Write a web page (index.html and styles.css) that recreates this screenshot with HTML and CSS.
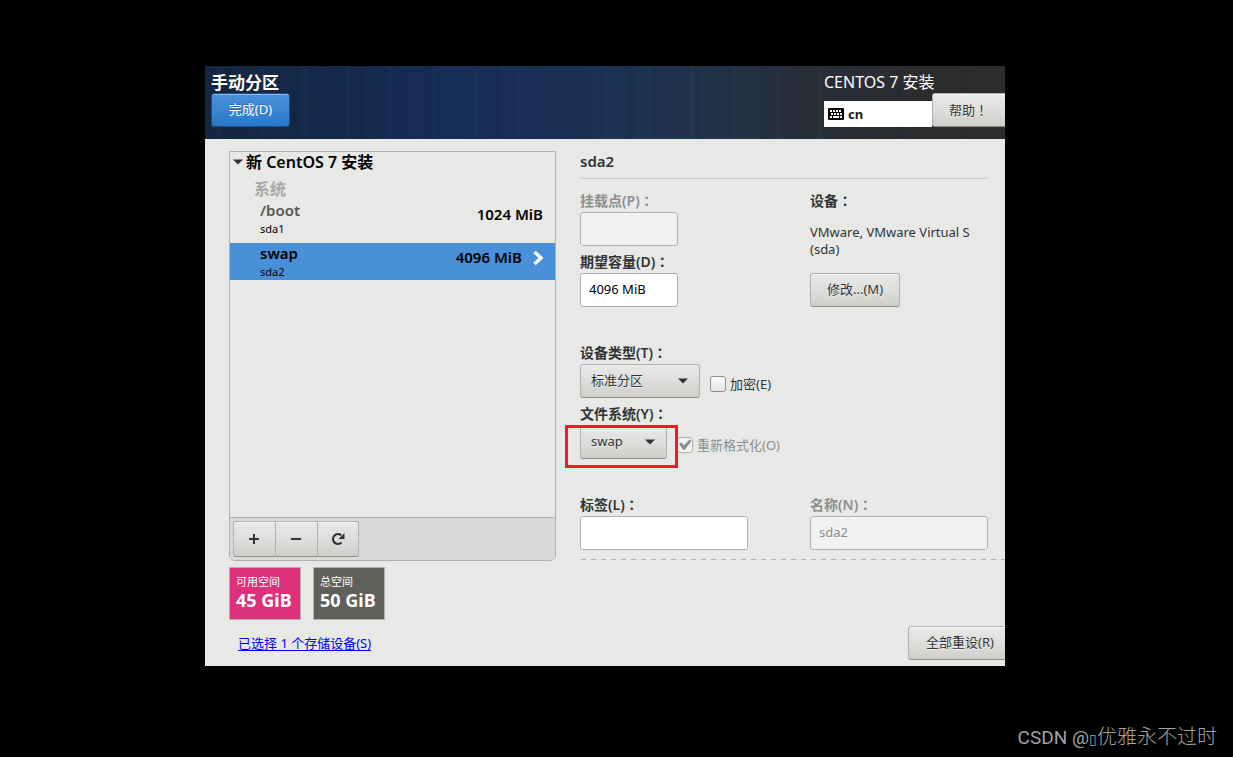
FILE: index.html
```html
<!DOCTYPE html>
<html lang="zh-CN">
<head>
<meta charset="utf-8">
<title>手动分区</title>
<link rel="stylesheet" href="styles.css">
</head>
<body>
<main class="installer">
  <header class="topbar">
    <div class="topbar-start">
      <h1 class="page-title">手动分区</h1>
      <button class="btn btn-primary" type="button">完成(D)</button>
    </div>
    <div class="topbar-end">
      <p class="product">CENTOS 7 安装</p>
      <div class="topbar-tools">
        <div class="keyboard">
          <svg class="keyboard-icon" width="16" height="12" viewBox="0 0 16 12" aria-hidden="true">
            <rect width="16" height="12" rx="1" fill="#000"/>
            <path d="M2 3h2M5 3h2M8 3h2M11 3h2M3 6h2M6 6h2M9 6h2M12 6h2M2 9h2M5 9h6M12 9h2" stroke="#fff" stroke-width="2"/>
          </svg>
          <span>cn</span>
        </div>
        <button class="btn btn-help" type="button">帮助<span class="wide-mark" lang="zh-TW">！</span></button>
      </div>
    </div>
  </header>

  <div class="content">
    <section class="left">
      <div class="panel">
        <div class="tree">
          <h2 class="tree-title">
            <svg width="10" height="6" viewBox="0 0 10 6" aria-hidden="true"><path d="M0 .5h10L5 5.5z" fill="#2e3436"/></svg>
            新 CentOS 7 安装
          </h2>
          <h3 class="tree-group">系统</h3>
          <ul class="mounts">
            <li class="mount">
              <div class="mount-text"><strong class="mount-name">/boot</strong><span class="mount-dev">sda1</span></div>
              <span class="mount-size">1024 MiB</span>
            </li>
            <li class="mount mount-selected">
              <div class="mount-text"><strong class="mount-name">swap</strong><span class="mount-dev">sda2</span></div>
              <span class="mount-size">4096 MiB</span>
              <svg class="chevron" width="10" height="14" viewBox="0 0 10 14" aria-hidden="true"><path d="M1.5 1L8 7l-6.500 6" fill="none" stroke="#fff" stroke-width="3.4"/></svg>
            </li>
          </ul>
        </div>
        <div class="toolbar">
          <div class="btn-group">
            <button class="btn tool" type="button" aria-label="添加"><svg width="12" height="12" viewBox="0 0 12 12"><path d="M1 6h10M6 1v10" stroke="#2e3436" stroke-width="2"/></svg></button>
            <button class="btn tool" type="button" aria-label="删除"><svg width="12" height="12" viewBox="0 0 12 12"><path d="M1 6h10" stroke="#2e3436" stroke-width="2"/></svg></button>
            <button class="btn tool" type="button" aria-label="重新载入"><svg width="14" height="14" viewBox="0 0 14 14"><path d="M10.500 10.500A4.900 4.900 0 1 1 10.200 3.400" fill="none" stroke="#2e3436" stroke-width="2.200"/><path d="M13.500 1v6h-6z" fill="#2e3436"/></svg></button>
          </div>
        </div>
      </div>
      <div class="tiles">
        <div class="tile tile-free"><span class="tile-label">可用空间</span><strong class="tile-value">45 GiB</strong></div>
        <div class="tile tile-total"><span class="tile-label">总空间</span><strong class="tile-value">50 GiB</strong></div>
      </div>
      <a class="devices-link" href="#">已选择 1 个存储设备(S)</a>
    </section>

    <section class="right">
      <h2 class="detail-title">sda2</h2>
      <form class="form">
        <div class="form-row">
          <div class="stack">
            <div class="field">
              <label class="label label-off" for="mount">挂载点(P)<span class="wide-mark" lang="zh-TW">：</span></label>
              <input class="input input-short" id="mount" type="text" disabled>
            </div>
            <div class="field">
              <label class="label" for="size">期望容量(D)<span class="wide-mark" lang="zh-TW">：</span></label>
              <input class="input input-short" id="size" type="text" value="4096 MiB">
            </div>
          </div>
          <div class="field">
            <span class="label">设备<span class="wide-mark" lang="zh-TW">：</span></span>
            <p class="device">VMware, VMware Virtual S (sda)</p>
            <button class="btn btn-modify" type="button">修改...(M)</button>
          </div>
        </div>

        <div class="stack">
          <div class="field">
            <label class="label" for="type">设备类型(T)<span class="wide-mark" lang="zh-TW">：</span></label>
            <div class="controls">
              <div class="select-box select-type">
                <select class="select" id="type"><option>标准分区</option></select>
                <svg class="caret" width="10" height="6" viewBox="0 0 10 6" aria-hidden="true"><path d="M0 .5h10L5 5.5z" fill="#2e3436"/></svg>
              </div>
              <label class="check"><input class="checkbox" type="checkbox">加密(E)</label>
            </div>
          </div>
          <div class="field">
            <label class="label" for="fs">文件系统(Y)<span class="wide-mark" lang="zh-TW">：</span></label>
            <div class="controls">
              <div class="select-box select-fs">
                <select class="select" id="fs"><option>swap</option></select>
                <svg class="caret" width="10" height="6" viewBox="0 0 10 6" aria-hidden="true"><path d="M0 .5h10L5 5.5z" fill="#2e3436"/></svg>
                <div class="highlight"></div>
              </div>
              <label class="check check-off">
                <span class="check-box"><input class="checkbox" type="checkbox" checked disabled><svg class="tick" width="14" height="12" viewBox="0 0 14 12" aria-hidden="true"><path d="M1 5l2.500-1.500L6 6.200 11.500.5l2 1.500L6.500 11H5.500z" fill="#8b8e8f"/></svg></span>重新格式化(O)</label>
            </div>
          </div>
        </div>

        <div class="form-row">
          <div class="field">
            <label class="label" for="tag">标签(L)<span class="wide-mark" lang="zh-TW">：</span></label>
            <input class="input input-medium" id="tag" type="text">
          </div>
          <div class="field">
            <label class="label label-off" for="name">名称(N)<span class="wide-mark" lang="zh-TW">：</span></label>
            <input class="input" id="name" type="text" value="sda2" disabled>
          </div>
        </div>
      </form>
      <div class="divider"></div>
      <button class="btn btn-reset" type="button">全部重设(R)</button>
    </section>
  </div>
</main>
<footer class="watermark">CSDN @<span class="missing">▯</span><span class="watermark-name">优雅永不过时</span></footer>
</body>
</html>
```
FILE: styles.css
```css
* {
  box-sizing: border-box;
}

body {
  margin: 0;
  padding: 66px 228px 0 205px;
  background: #000;
  color: #2e3436;
  font: 13px/17px "Noto Sans", "Noto Sans CJK SC", sans-serif;
}

h1, h2, h3, p, ul {
  margin: 0;
  padding: 0;
}

button, input, select {
  font: inherit;
  color: inherit;
}

.wide-mark {
  font-family: "Noto Sans CJK TC", sans-serif;
}

.installer {
  background: #e8e8e6;
  overflow: hidden;
}

.topbar {
  display: flex;
  justify-content: space-between;
  min-height: 73px;
  padding: 6px 0 12px 6px;
  color: #fff;
  background:
    linear-gradient(90deg, transparent 55%, rgba(44, 44, 44, .4) 88%),
    repeating-linear-gradient(90deg, transparent 0 11px, rgba(40, 85, 150, .1) 13px 14px, transparent 17px 43px),
    repeating-linear-gradient(90deg, transparent 0 19px, rgba(5, 20, 50, .1) 22px 25px, transparent 28px 67px),
    linear-gradient(90deg, #15263f 0%, #16284a 15%, #162d55 30%, #1b3054 48%, #20334e 60%, #262f3b 76%, #2b2c2e 90%, #2c2c2c 100%);
}

.topbar-start {
  display: flex;
  flex-direction: column;
  align-items: flex-start;
}

.page-title {
  font-size: 17px;
  line-height: 21px;
  font-weight: 700;
}

.topbar-end {
  width: 181px;
}

.product {
  font-size: 16px;
  line-height: 21px;
}

.topbar-tools {
  display: flex;
  align-items: flex-end;
}

.keyboard {
  display: flex;
  align-items: center;
  gap: 4px;
  width: 108px;
  height: 26px;
  padding: 0 4px;
  background: #fff;
  color: #1a1a1a;
  font-weight: 700;
}

.btn {
  height: 34px;
  padding: 0 16px 1px;
  border: 1px solid #b0b0ae;
  border-bottom-color: #8d8d8a;
  border-radius: 3px;
  background: linear-gradient(#e9e9e8, #dededc 50%, #cececb);
  box-shadow: inset 0 1px #f8f8f7;
  color: #2e3436;
  text-shadow: 0 1px #f4f4f4;
  white-space: nowrap;
}

.btn-primary {
  min-width: 79px;
  border-color: #1c5187;
  background: linear-gradient(#4a90d9, #3c86d4 50%, #2a76c6);
  box-shadow: inset 0 1px #8dbae8;
  color: #fff;
  text-shadow: 0 -1px #2a6cb3;
}

.btn-help {
  flex: 1;
  border-right: 0;
  border-radius: 3px 0 0 3px;
  text-align: left;
}

.content {
  display: grid;
  grid-template-columns: 327px 1fr;
  gap: 24px;
  padding: 12px 0 6px 24px;
}

.panel {
  border: 1px solid #b0b1af;
  border-radius: 0 0 6px 6px;
  overflow: hidden;
}

.tree {
  min-height: 365px;
  color: #000;
}

.tree-title {
  display: flex;
  align-items: center;
  gap: 3px;
  padding-left: 3px;
  font-size: 16px;
  line-height: 20px;
  font-weight: 600;
}

.tree-group {
  padding: 6px 0 0 24px;
  color: #a8a8a6;
  font-size: 16px;
  line-height: 22px;
}

.mounts {
  display: grid;
  gap: 6px;
  list-style: none;
}

.mount {
  display: flex;
  align-items: flex-start;
  height: 37px;
  padding: 0 12px 0 30px;
}

.mount-text {
  display: flex;
  flex: 1;
  flex-direction: column;
}

.mount-name {
  color: #555753;
  font-size: 15px;
  line-height: 21px;
  font-weight: 600;
}

.mount-dev {
  font-size: 11px;
  line-height: 15px;
}

.mount-size {
  font-size: 15px;
  line-height: 29px;
  font-weight: 600;
}

.mount-selected {
  background: #4a90d9;
}

.mount-selected .mount-name {
  color: #000;
}

.chevron {
  margin: 8px 0 0 11px;
}

.toolbar {
  padding: 3px;
  border-top: 1px solid #b0b1af;
  background: #d9d9d7;
}

.btn-group {
  display: flex;
}

.tool {
  display: flex;
  align-items: center;
  justify-content: center;
  width: 43px;
  height: 36px;
  padding: 0 1px 0 0;
  border-radius: 0;
}

.tool + .tool {
  width: 42px;
  border-left: 0;
}

.tool:first-child {
  border-radius: 3px 0 0 3px;
}

.tool + .tool:last-child {
  width: 41px;
  border-radius: 0 3px 3px 0;
}

.tiles {
  display: flex;
  gap: 12px;
  padding-top: 6px;
}

.tile {
  display: flex;
  flex-direction: column;
  min-width: 72px;
  height: 53px;
  padding: 6px;
  border: 1px solid #b0b1af;
  color: #fff;
}

.tile-free {
  background: #dd317b;
}

.tile-total {
  background: #5f6059;
}

.tile-label {
  font-size: 11px;
  line-height: 16px;
}

.tile-value {
  font-size: 18px;
  line-height: 20px;
  font-weight: 700;
}

.devices-link {
  display: inline-block;
  margin: 15px 0 0 9px;
  color: #00f;
  text-underline-offset: 2px;
}

.right {
  display: flex;
  flex-direction: column;
}

.detail-title {
  margin-right: 17px;
  padding: 0 0 6px;
  border-bottom: 1px solid #cbcbc9;
  font-size: 15px;
  line-height: 21px;
  font-weight: 600;
}

.form {
  display: grid;
  gap: 33px;
  margin-right: 17px;
  padding-top: 9px;
}

.form-row {
  display: grid;
  grid-template-columns: 1fr 178px;
}

.stack {
  display: grid;
  gap: 3px;
}

.field {
  display: flex;
  flex-direction: column;
  align-items: flex-start;
}

.label {
  height: 24px;
  font-size: 14px;
  line-height: 24px;
  font-weight: 600;
}

.label-off {
  color: #8b8e8f;
}

.input {
  width: 100%;
  height: 34px;
  padding: 0 8px 2px;
  border: 1px solid #b0b1af;
  border-radius: 3px;
  background: #fff;
  color: #000;
}

.input:disabled {
  background: #f1f1f1;
  color: #8b8e8f;
}

.input-short {
  width: 98px;
}

.input-medium {
  width: 168px;
}

.device {
  padding: 12px 0 15px;
}

.controls {
  display: flex;
  align-items: flex-end;
  gap: 10px;
}

.select-box {
  position: relative;
  display: grid;
  align-items: center;
}

.select-type {
  width: 120px;
}

.select-fs {
  width: 87px;
}

.select {
  grid-area: 1 / 1;
  width: 100%;
  height: 34px;
  padding: 0 10px 1px;
  appearance: none;
  border: 1px solid #b0b0ae;
  border-bottom-color: #8d8d8a;
  border-radius: 3px;
  background: linear-gradient(#e9e9e8, #dededc 50%, #cececb);
  text-shadow: 0 1px #f4f4f4;
}

.caret {
  grid-area: 1 / 1;
  justify-self: end;
  margin-right: 12px;
  pointer-events: none;
}

.highlight {
  position: absolute;
  top: 0;
  left: -15px;
  width: 113px;
  height: 43px;
  border: 3px solid #ed1c24;
  pointer-events: none;
}

.check {
  display: flex;
  align-items: center;
  gap: 4px;
  height: 16px;
  margin-bottom: 6px;
}

.check-off {
  color: #8b8e8f;
}

.check-box {
  display: grid;
  place-items: center;
}

.checkbox {
  grid-area: 1 / 1;
  width: 16px;
  height: 16px;
  margin: 0;
  appearance: none;
  border: 1px solid #8d8f8c;
  border-radius: 3px;
  background: linear-gradient(#fbfbfb, #e6e6e5);
}

.checkbox:disabled {
  border-color: #b0b1af;
  background: #f1f1f1;
}

.tick {
  grid-area: 1 / 1;
}

.divider {
  height: 1px;
  margin: 9px 0 66px 1px;
  background: repeating-linear-gradient(90deg, #b0b1af 0 5px, transparent 5px 10px);
}

.btn-reset {
  align-self: flex-end;
  width: 97px;
  padding-right: 10px;
  border-right: 0;
  border-radius: 3px 0 0 3px;
}

.watermark {
  margin: 56px -212px 0 0;
  color: #a2a2a2;
  font: 19px/30px Roboto, "Noto Sans CJK SC", sans-serif;
  text-align: right;
}

.watermark-name {
  font-size: 20px;
  font-weight: 300;
}

.missing {
  font-size: 14px;
}
```
